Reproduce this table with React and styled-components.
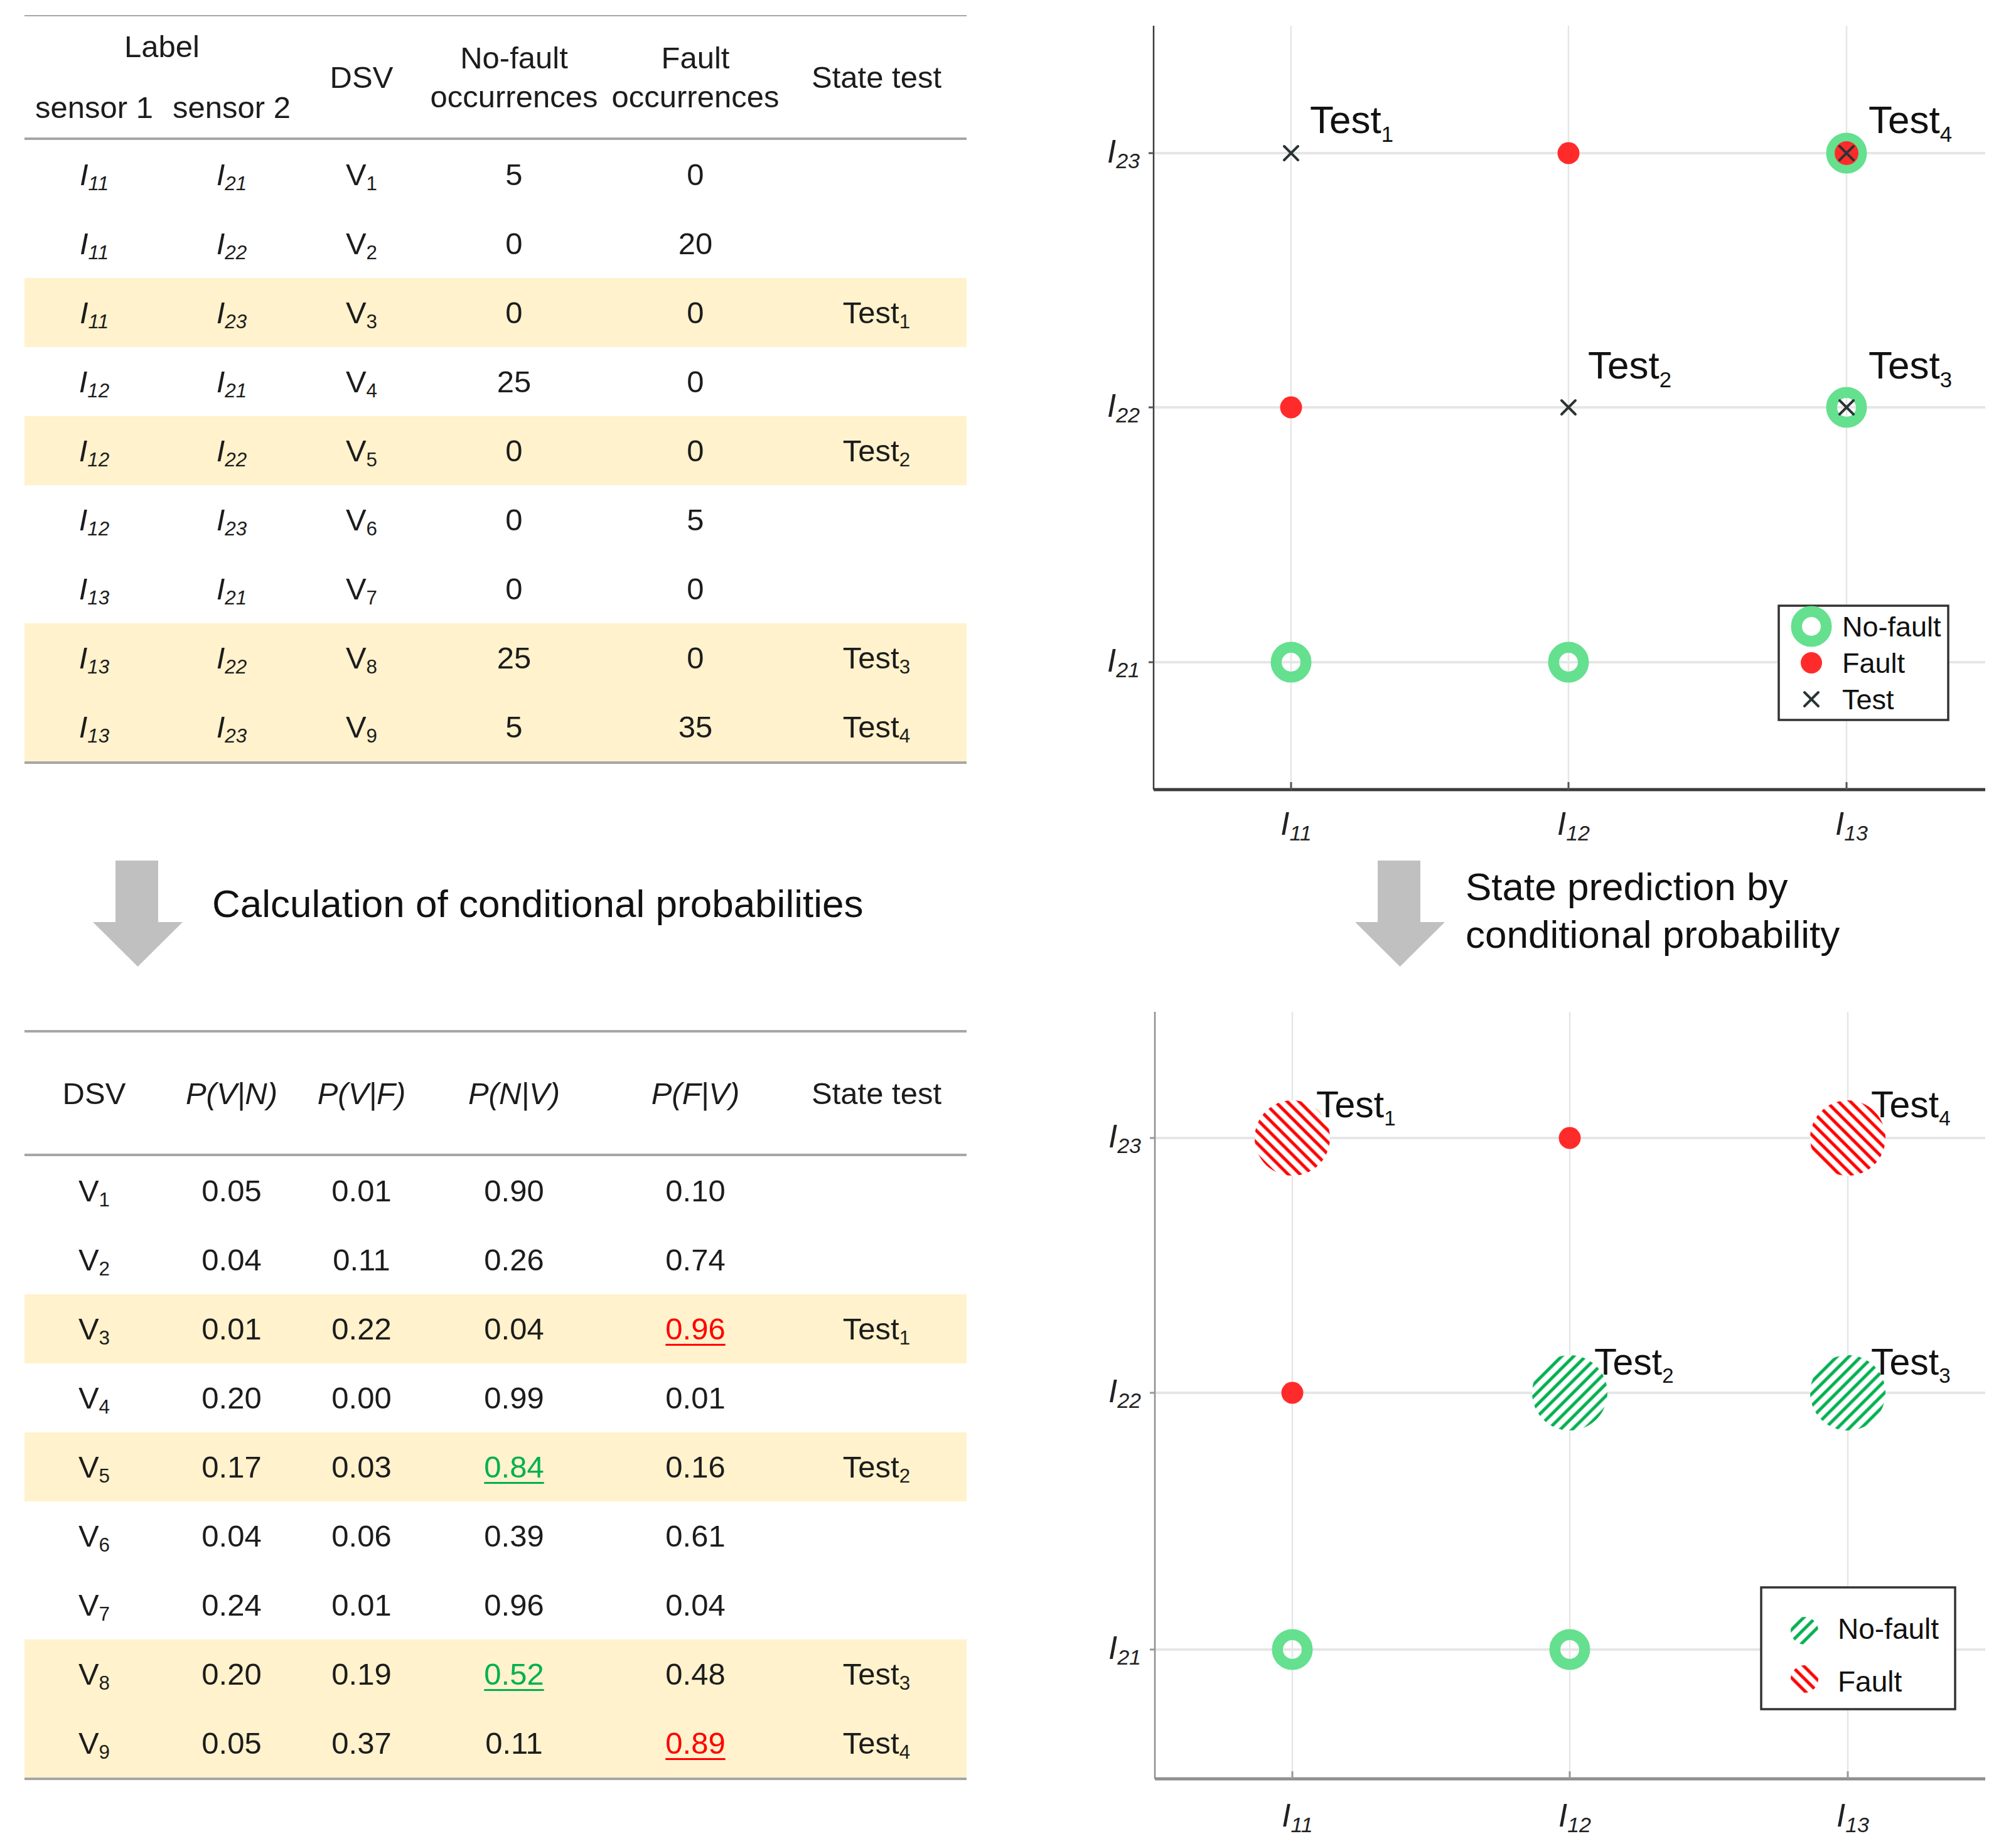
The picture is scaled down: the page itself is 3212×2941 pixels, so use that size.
import React from "react";
import styled, { createGlobalStyle } from "styled-components";

const COLS = "222px 216px 198px 288px 290px 287px";
const RULE = "#a6a6a6";

const GlobalStyle = createGlobalStyle`
  html, body {
    margin: 0;
    padding: 0;
    background: #ffffff;
  }
  body {
    font-family: "Liberation Sans", Arial, sans-serif;
    color: #1c1c1c;
  }
`;

const Page = styled.div`
  width: 3212px;
  height: 2941px;
  box-sizing: border-box;
  padding-left: 39px;
  display: grid;
  grid-template-columns: 1501px 1472px;
  grid-template-rows: 1360px 200px 1381px;
  column-gap: 200px;
  align-items: start;
  overflow: hidden;
`;

const Table = styled.div`
  margin-top: ${(p) => p.$top}px;
  border-top: ${(p) => p.$rule}px solid ${RULE};
  border-bottom: 4px solid ${RULE};
  font-size: 49px;
`;

const Head = styled.div`
  display: grid;
  grid-template-columns: ${COLS};
  grid-template-rows: ${(p) => (p.$double ? "1fr 1fr" : "1fr")};
  height: 193px;
  align-items: center;
  border-bottom: 4px solid ${RULE};
`;

const HeadCell = styled.div`
  grid-column: ${(p) => p.$col || "auto"};
  grid-row: ${(p) => p.$row || "auto"};
  text-align: center;
  line-height: 62px;
  white-space: nowrap;
`;

const Row = styled.div`
  display: grid;
  grid-template-columns: ${COLS};
  height: 110px;
  align-items: center;
  justify-items: center;
  background: ${(p) => (p.$hl ? "#fff2cc" : "transparent")};
`;

const Cell = styled.span`
  white-space: nowrap;
  font-style: ${(p) => (p.$italic ? "italic" : "normal")};
`;

const Value = styled.span`
  color: ${(p) => (p.$tone === "red" ? "#ff0000" : p.$tone === "green" ? "#00b050" : "inherit")};
  text-decoration: ${(p) => (p.$tone ? "underline" : "none")};
  text-decoration-thickness: 3px;
  text-underline-offset: 7px;
`;

const Sub = styled.sub`
  font-size: 0.64em;
  vertical-align: -0.24em;
  line-height: 0;
`;

const Step = styled.div`
  display: flex;
  align-items: flex-start;
  padding-top: 11px;
  padding-left: ${(p) => p.$indent}px;
  gap: ${(p) => p.$gap}px;
`;

const Caption = styled.div`
  margin-top: ${(p) => p.$offset}px;
  font-size: 62px;
  line-height: 76px;
  color: #111;
  white-space: nowrap;
`;

const ChartSvg = styled.svg`
  display: block;
  font-family: "Liberation Sans", Arial, sans-serif;
`;

const I = ({ n }) => (
  <Cell $italic>
    I<Sub>{n}</Sub>
  </Cell>
);

const V = ({ n }) => (
  <Cell>
    V<Sub>{n}</Sub>
  </Cell>
);

const TestTag = ({ n }) =>
  n ? (
    <Cell>
      Test<Sub>{n}</Sub>
    </Cell>
  ) : (
    <span />
  );

const Arrow = () => (
  <svg width="143" height="169" viewBox="0 0 143 169">
    <polygon points="36,0 104,0 104,98 143,98 71.5,169 0,98 36,98" fill="#c0c0c0" />
  </svg>
);

const countRows = [
  ["11", "21", 1, "5", "0", 0],
  ["11", "22", 2, "0", "20", 0],
  ["11", "23", 3, "0", "0", 1],
  ["12", "21", 4, "25", "0", 0],
  ["12", "22", 5, "0", "0", 2],
  ["12", "23", 6, "0", "5", 0],
  ["13", "21", 7, "0", "0", 0],
  ["13", "22", 8, "25", "0", 3],
  ["13", "23", 9, "5", "35", 4],
];

const probRows = [
  [1, "0.05", "0.01", "0.90", "0.10", 0],
  [2, "0.04", "0.11", "0.26", "0.74", 0],
  [3, "0.01", "0.22", "0.04", "0.96", 1, null, "red"],
  [4, "0.20", "0.00", "0.99", "0.01", 0],
  [5, "0.17", "0.03", "0.84", "0.16", 2, "green", null],
  [6, "0.04", "0.06", "0.39", "0.61", 0],
  [7, "0.24", "0.01", "0.96", "0.04", 0],
  [8, "0.20", "0.19", "0.52", "0.48", 3, "green", null],
  [9, "0.05", "0.37", "0.11", "0.89", 4, null, "red"],
];

function CountTable() {
  return (
    <Table $top={24} $rule={2}>
      <Head $double>
        <HeadCell $col="1 / 3" $row="1">Label</HeadCell>
        <HeadCell $col="1" $row="2">sensor 1</HeadCell>
        <HeadCell $col="2" $row="2">sensor 2</HeadCell>
        <HeadCell $col="3" $row="1 / 3">DSV</HeadCell>
        <HeadCell $col="4" $row="1 / 3">
          No-fault
          <br />
          occurrences
        </HeadCell>
        <HeadCell $col="5" $row="1 / 3">
          Fault
          <br />
          occurrences
        </HeadCell>
        <HeadCell $col="6" $row="1 / 3">State test</HeadCell>
      </Head>
      {countRows.map(([a, b, v, nf, f, t]) => (
        <Row key={v} $hl={t > 0}>
          <I n={a} />
          <I n={b} />
          <V n={v} />
          <Cell>{nf}</Cell>
          <Cell>{f}</Cell>
          <TestTag n={t} />
        </Row>
      ))}
    </Table>
  );
}

function ProbTable() {
  return (
    <Table $top={81} $rule={4}>
      <Head>
        <HeadCell>DSV</HeadCell>
        <HeadCell>
          <Cell $italic>P(V|N)</Cell>
        </HeadCell>
        <HeadCell>
          <Cell $italic>P(V|F)</Cell>
        </HeadCell>
        <HeadCell>
          <Cell $italic>P(N|V)</Cell>
        </HeadCell>
        <HeadCell>
          <Cell $italic>P(F|V)</Cell>
        </HeadCell>
        <HeadCell>State test</HeadCell>
      </Head>
      {probRows.map(([v, a, b, nv, fv, t, toneN, toneF]) => (
        <Row key={v} $hl={t > 0}>
          <V n={v} />
          <Cell>{a}</Cell>
          <Cell>{b}</Cell>
          <Value $tone={toneN}>{nv}</Value>
          <Value $tone={toneF}>{fv}</Value>
          <TestTag n={t} />
        </Row>
      ))}
    </Table>
  );
}

/* chart pieces, drawn in page coordinates */
const GREEN = "#64e08f";

const Ring = ({ x, y }) => <circle cx={x} cy={y} r={23.75} fill="none" stroke={GREEN} strokeWidth={17.5} />;
const Dot = ({ x, y, r = 17.5 }) => <circle cx={x} cy={y} r={r} fill="#ff2b2b" />;
const Cross = ({ x, y }) => (
  <g stroke="#2b3434" strokeWidth="4" strokeLinecap="round">
    <line x1={x - 11} y1={y - 11} x2={x + 11} y2={y + 11} />
    <line x1={x - 11} y1={y + 11} x2={x + 11} y2={y - 11} />
  </g>
);
const Hatch = ({ x, y, r = 60, id }) => <circle cx={x} cy={y} r={r} fill={`url(#${id})`} />;

const AxisText = ({ x, y, n, anchor = "middle" }) => (
  <text x={x} y={y} textAnchor={anchor} fontStyle="italic" fontSize="51" fill="#222">
    I
    <tspan fontSize="34" dy="9">
      {n}
    </tspan>
  </text>
);

const TestText = ({ x, y, n, size }) => (
  <text x={x} y={y} fontSize={size} fill="#111">
    Test
    <tspan fontSize={size * 0.56} dy={size * 0.22}>
      {n}
    </tspan>
  </text>
);

function Grid({ xs, ys, top, bottom, left, right, axisColor, axisYWidth, tickColor }) {
  return (
    <g>
      {xs.map((x) => (
        <line key={x} x1={x} y1={top} x2={x} y2={bottom} stroke="#e6e6e6" strokeWidth="2.5" />
      ))}
      {ys.map((y) => (
        <line key={y} x1={left} y1={y} x2={right} y2={y} stroke="#e6e6e6" strokeWidth="4" />
      ))}
      <line x1={left} y1={top} x2={left} y2={bottom} stroke={axisColor} strokeWidth={axisYWidth} />
      <line x1={left} y1={bottom} x2={right} y2={bottom} stroke={axisColor} strokeWidth="5" />
      {xs.map((x) => (
        <line key={`t${x}`} x1={x} y1={bottom} x2={x} y2={bottom - 12} stroke={tickColor} strokeWidth="3" />
      ))}
      {ys.map((y) => (
        <line key={`u${y}`} x1={left - 8} y1={y} x2={left} y2={y} stroke={tickColor} strokeWidth="3" />
      ))}
    </g>
  );
}

function ObservedChart() {
  const xs = [2057, 2499, 2942];
  const ys = [244, 649, 1055];
  return (
    <ChartSvg width="1472" height="1360" viewBox="1740 0 1472 1360">
      <Grid xs={xs} ys={ys} top={41} bottom={1258} left={1838} right={3163} axisColor="#3a3a3a" axisYWidth={2.5} tickColor="#555" />
      <AxisText x={1816} y={259} n="23" anchor="end" />
      <AxisText x={1816} y={664} n="22" anchor="end" />
      <AxisText x={1816} y={1070} n="21" anchor="end" />
      <AxisText x={xs[0] + 8} y={1330} n="11" />
      <AxisText x={xs[1] + 8} y={1330} n="12" />
      <AxisText x={xs[2] + 8} y={1330} n="13" />

      <Cross x={xs[0]} y={ys[0]} />
      <Dot x={xs[1]} y={ys[0]} />
      <Ring x={xs[2]} y={ys[0]} />
      <Dot x={xs[2]} y={ys[0]} r={19} />
      <Cross x={xs[2]} y={ys[0]} />

      <Dot x={xs[0]} y={ys[1]} />
      <Cross x={xs[1]} y={ys[1]} />
      <Ring x={xs[2]} y={ys[1]} />
      <Cross x={xs[2]} y={ys[1]} />

      <Ring x={xs[0]} y={ys[2]} />
      <Ring x={xs[1]} y={ys[2]} />

      <TestText x={2087} y={212} n="1" size={62} />
      <TestText x={2977} y={212} n="4" size={62} />
      <TestText x={2530} y={603} n="2" size={62} />
      <TestText x={2977} y={603} n="3" size={62} />

      <rect x="2834" y="965" width="270" height="182" fill="#fff" stroke="#333" strokeWidth="3.5" />
      <Ring x={2886} y={998} />
      <Dot x={2886} y={1056} r={17} />
      <Cross x={2886} y={1114} />
      <text x="2935" y="1014" fontSize="45" fill="#111">No-fault</text>
      <text x="2935" y="1072" fontSize="45" fill="#111">Fault</text>
      <text x="2935" y="1130" fontSize="45" fill="#111">Test</text>
    </ChartSvg>
  );
}

function PredictedChart() {
  const xs = [2059, 2501, 2944];
  const ys = [1813, 2219, 2628];
  return (
    <ChartSvg width="1472" height="1381" viewBox="1740 1560 1472 1381">
      <defs>
        <pattern id="hatchRed" patternUnits="userSpaceOnUse" width="13.5" height="13.5" patternTransform="rotate(-45)">
          <rect width="13.5" height="13.5" fill="#fff" />
          <line x1="6.75" y1="0" x2="6.75" y2="13.5" stroke="#ff0000" strokeWidth="5" />
        </pattern>
        <pattern id="hatchGreen" patternUnits="userSpaceOnUse" width="13.5" height="13.5" patternTransform="rotate(45)">
          <rect width="13.5" height="13.5" fill="#fff" />
          <line x1="6.75" y1="0" x2="6.75" y2="13.5" stroke="#00b050" strokeWidth="5" />
        </pattern>
      </defs>
      <Grid xs={xs} ys={ys} top={1612} bottom={2834} left={1840} right={3163} axisColor="#8f8f8f" axisYWidth={2.5} tickColor="#999" />
      <AxisText x={1818} y={1828} n="23" anchor="end" />
      <AxisText x={1818} y={2234} n="22" anchor="end" />
      <AxisText x={1818} y={2643} n="21" anchor="end" />
      <AxisText x={xs[0] + 8} y={2910} n="11" />
      <AxisText x={xs[1] + 8} y={2910} n="12" />
      <AxisText x={xs[2] + 8} y={2910} n="13" />

      <Hatch x={xs[0]} y={ys[0]} id="hatchRed" />
      <Dot x={xs[1]} y={ys[0]} />
      <Hatch x={xs[2]} y={ys[0]} id="hatchRed" />

      <Dot x={xs[0]} y={ys[1]} />
      <Hatch x={xs[1]} y={ys[1]} id="hatchGreen" />
      <Hatch x={xs[2]} y={ys[1]} id="hatchGreen" />

      <Ring x={xs[0]} y={ys[2]} />
      <Ring x={xs[1]} y={ys[2]} />

      <TestText x={2097} y={1780} n="1" size={59} />
      <TestText x={2981} y={1780} n="4" size={59} />
      <TestText x={2540} y={2190} n="2" size={59} />
      <TestText x={2981} y={2190} n="3" size={59} />

      <rect x="2806" y="2529" width="309" height="194" fill="#fff" stroke="#333" strokeWidth="3.5" />
      <Hatch x={2875} y={2598} r={22} id="hatchGreen" />
      <Hatch x={2875} y={2675} r={22} id="hatchRed" />
      <text x="2928" y="2611" fontSize="46" fill="#111">No-fault</text>
      <text x="2928" y="2695" fontSize="46" fill="#111">Fault</text>
    </ChartSvg>
  );
}

export default function App() {
  return (
    <>
      <GlobalStyle />
      <Page>
        <CountTable />
        <ObservedChart />
        <Step $indent={109} $gap={47}>
          <Arrow />
          <Caption $offset={31}>Calculation of conditional probabilities</Caption>
        </Step>
        <Step $indent={419} $gap={33}>
          <Arrow />
          <Caption $offset={4}>
            State prediction by
            <br />
            conditional probability
          </Caption>
        </Step>
        <ProbTable />
        <PredictedChart />
      </Page>
    </>
  );
}
